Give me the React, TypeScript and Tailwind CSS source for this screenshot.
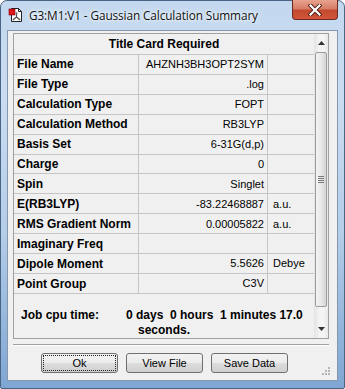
import React from 'react';

const rows = [
  { label: 'File Name', value: 'AHZNH3BH3OPT2SYM', unit: '' },
  { label: 'File Type', value: '.log', unit: '' },
  { label: 'Calculation Type', value: 'FOPT', unit: '' },
  { label: 'Calculation Method', value: 'RB3LYP', unit: '' },
  { label: 'Basis Set', value: '6-31G(d,p)', unit: '' },
  { label: 'Charge', value: '0', unit: '' },
  { label: 'Spin', value: 'Singlet', unit: '' },
  { label: 'E(RB3LYP)', value: '-83.22468887', unit: 'a.u.' },
  { label: 'RMS Gradient Norm', value: '0.00005822', unit: 'a.u.' },
  { label: 'Imaginary Freq', value: '', unit: '' },
  { label: 'Dipole Moment', value: '5.5626', unit: 'Debye' },
  { label: 'Point Group', value: 'C3V', unit: '' },
];

const font = { fontFamily: '"Liberation Sans", Arial, sans-serif' };

const AppIcon = () => (
  <svg width="16" height="16" viewBox="0 0 16 16">
    <path d="M3.5 1.5h7l3 3v10h-10z" fill="#fff" stroke="#222" />
    <path d="M10.5 1.5v3h3" fill="none" stroke="#222" />
    <rect x="1" y="2" width="6" height="6" fill="#e0141b" stroke="#7a0000" strokeWidth="0.6" />
    <path d="M8.5 6v4M8.5 10l-3 2.5M8.5 10l3 2.5" stroke="#555" strokeWidth="1.2" fill="none" />
    <circle cx="8.5" cy="6" r="1" fill="#777" />
    <circle cx="5.5" cy="12.5" r="1" fill="#777" />
    <circle cx="11.5" cy="12.5" r="1" fill="#777" />
  </svg>
);

const Button = ({ children, focused }: { children: React.ReactNode; focused?: boolean }) => (
  <div className="w-[77px] h-[20px] rounded-[3px] border border-[#707070] bg-[linear-gradient(to_bottom,#f2f2f2_0%,#ebebeb_50%,#dddddd_51%,#cfcfcf_100%)] p-[2px]">
    <div
      className={`h-full flex items-center justify-center text-[11px] text-black ${focused ? 'outline outline-1 outline-dotted outline-[#222]' : ''}`}
    >
      {children}
    </div>
  </div>
);

const App: React.FC = () => {
  return (
    <div className="w-[345px] h-[389px] overflow-hidden bg-white" style={font}>
      <div className="w-[345px] h-[389px] rounded-t-[7px] rounded-b-[2px] border border-[#4a6583] bg-[linear-gradient(to_bottom,#c3d8ef_0%,#cadcf1_25%,#b4cde9_60%,#7fa6d3_100%)] px-[6px] pb-[7px] flex flex-col">
        {/* title bar */}
        <div className="h-[29px] flex items-start shrink-0">
          <div className="mt-[6px] ml-[1px]">
            <AppIcon />
          </div>
          <div
            className="mt-[6px] ml-[5px] text-[#111] tracking-[-0.1px] leading-[16px]"
            style={{ fontFamily: '"Open Sans", "Noto Sans", sans-serif', fontSize: '11.8px', textShadow: '0 0 6px #fff, 0 0 3px #fff' }}
          >
            G3:M1:V1 - Gaussian Calculation Summary
          </div>
          <div className="ml-auto -mt-[1px] w-[46px] h-[20px] rounded-b-[4px] border border-[#6b2a20] border-t-0 bg-[linear-gradient(to_bottom,#e8a38f_0%,#d77d67_45%,#c14a2f_55%,#d2553a_100%)] flex items-center justify-center">
            <svg width="14" height="12" viewBox="0 0 14 12">
              <path d="M2.5 1.5l9 9M11.5 1.5l-9 9" stroke="#4a1a10" strokeWidth="4" strokeLinecap="square" />
              <path d="M2.5 1.5l9 9M11.5 1.5l-9 9" stroke="#fff" strokeWidth="2.2" strokeLinecap="square" />
            </svg>
          </div>
        </div>

        {/* client area */}
        <div className="flex-1 border border-[#8497ad] bg-[#f0f0f0] flex flex-col relative">
          <div className="ml-[5px] mt-[2px] w-[316px] h-[306px] border border-[#a0a0a0] flex">
            <div className="w-[300px] flex flex-col">
              <div className="h-[21px] border-b border-[#c5c5c5] flex items-center justify-center text-[12px] font-bold text-black">
                Title Card Required
              </div>
              {rows.map((r) => (
                <div key={r.label} className="h-[20px] border-b border-[#c5c5c5] grid grid-cols-[125px_129px_1fr]">
                  <div className="border-r border-[#c5c5c5] pl-[3px] flex items-center text-[12px] font-bold text-black whitespace-nowrap">
                    {r.label}
                  </div>
                  <div className="border-r border-[#c5c5c5] pr-[3px] flex items-center justify-end text-[11px] text-black whitespace-nowrap">
                    {r.value}
                  </div>
                  <div className="pl-[5px] flex items-center text-[11px] text-black">{r.unit}</div>
                </div>
              ))}
              <div className="flex-1 flex pt-[14px] text-[12px] font-bold text-black leading-[15px]">
                <div className="pl-[7px] w-[112px]">Job cpu time:</div>
                <div className="flex flex-col">
                  <div className="whitespace-pre">0 days  0 hours  1 minutes 17.0</div>
                  <div className="pl-[12px]">seconds.</div>
                </div>
              </div>
            </div>
            {/* scrollbar */}
            <div className="w-[14px] flex flex-col bg-[linear-gradient(to_right,#e3e3e3,#f4f4f4_40%,#f4f4f4_70%,#e8e8e8)]">
              <div className="h-[18px] flex items-center justify-center">
                <svg width="7" height="4" viewBox="0 0 7 4">
                  <path d="M3.5 0L7 4H0z" fill="#333" />
                </svg>
              </div>
              <div className="h-[255px] mx-[1px] rounded-[2px] border border-[#9b9b9b] bg-[linear-gradient(to_right,#f4f4f4,#e8e8e8_50%,#d5d5d5)] flex items-center justify-center">
                <div className="flex flex-col gap-[1px]">
                  <div className="w-[6px] h-[1px] bg-[#7a7a7a]" />
                  <div className="w-[6px] h-[1px] bg-[#7a7a7a]" />
                  <div className="w-[6px] h-[1px] bg-[#7a7a7a]" />
                  <div className="w-[6px] h-[1px] bg-[#7a7a7a]" />
                </div>
              </div>
              <div className="flex-1" />
              <div className="h-[18px] flex items-center justify-center">
                <svg width="7" height="4" viewBox="0 0 7 4">
                  <path d="M0 0H7L3.5 4z" fill="#333" />
                </svg>
              </div>
            </div>
          </div>

          <div className="ml-[5px] mt-[5px] w-[316px] h-[2px] border-t border-[#a0a0a0] border-b border-b-white" />

          <div className="mt-[7px] pl-[33px] flex gap-[8px]">
            <Button focused>Ok</Button>
            <Button>View File</Button>
            <Button>Save Data</Button>
          </div>

          <div className="absolute right-[7px] bottom-[5px]">
            <svg width="9" height="9" viewBox="0 0 9 9">
              <g fill="#b5b5b5">
                <rect x="7" y="1" width="2" height="2" />
                <rect x="4" y="4" width="2" height="2" />
                <rect x="7" y="4" width="2" height="2" />
                <rect x="1" y="7" width="2" height="2" />
                <rect x="4" y="7" width="2" height="2" />
                <rect x="7" y="7" width="2" height="2" />
              </g>
            </svg>
          </div>
        </div>
      </div>
    </div>
  );
};

export default App;
